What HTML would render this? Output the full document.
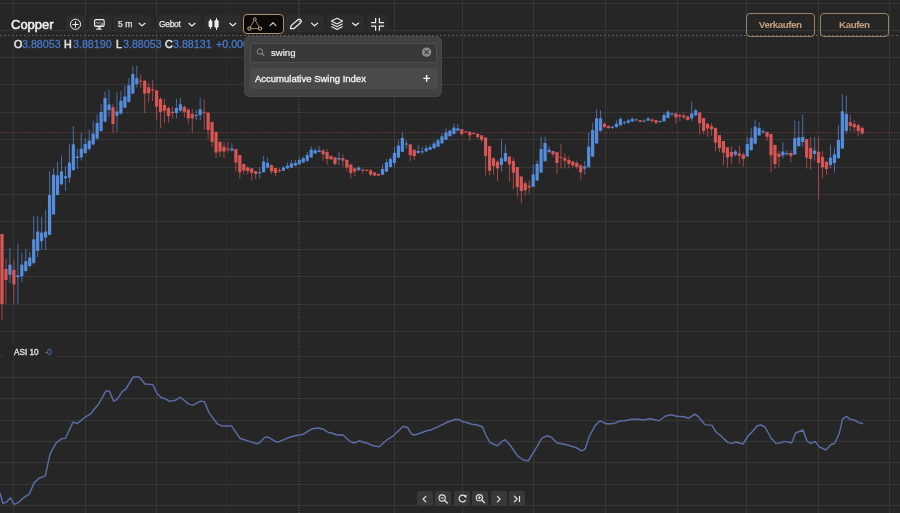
<!DOCTYPE html>
<html><head><meta charset="utf-8">
<style>
*{box-sizing:border-box}
html,body{margin:0;-webkit-font-smoothing:antialiased;padding:0;width:900px;height:513px;overflow:hidden;background:#262626;font-family:"Liberation Sans",sans-serif;color:#e6e6e6}
svg{position:absolute;left:0;top:0}
.abs{position:absolute;white-space:nowrap;will-change:transform}
.tb{position:absolute;top:14.5px;height:17px;background:#2c2c2c;border-radius:3px}
.title{position:absolute;will-change:transform;left:11px;top:18.1px;font-size:13px;line-height:14px;color:#f2f2f2;-webkit-text-stroke:0.5px #f2f2f2}
.legend{position:absolute;left:0;top:38px;font-size:10.7px;line-height:12px;color:#e8e8e8;white-space:nowrap}
.legend span{color:#4879c8;-webkit-text-stroke:0.3px #4879c8}
.legend b{font-weight:normal;color:#e4e4e4;-webkit-text-stroke:0.55px #e4e4e4}
.dd{font-size:8.5px;line-height:10px;letter-spacing:-0.35px;word-spacing:0.8px;color:#e8e8e8;-webkit-text-stroke:0.25px #e8e8e8}
.popup{position:absolute;left:244px;top:36px;width:198px;height:61px;background:#414141;border:1px solid #474747;border-radius:5px}
.search{position:absolute;left:5px;top:6px;width:187px;height:20px;background:#393939;border:1px solid #4f4f4f;border-radius:2px}
.row{position:absolute;left:5px;top:31px;width:188px;height:21px;background:#4a4a4a;border-radius:3px}
.btn{position:absolute;will-change:transform;top:12.5px;height:23.6px;border:1px solid #9c8268;border-radius:4px;color:#c99f7c;font-size:9.8px;font-weight:bold;letter-spacing:-0.45px;text-align:center;line-height:22px}
.nav{position:absolute;top:490.5px;width:16px;height:15.2px;background:#393939;border-radius:2px}
#wrap{position:absolute;left:-4px;top:-4px;width:908px;height:521px;overflow:hidden;filter:blur(0.3px);background:#262626}
#in{position:absolute;left:4px;top:4px;width:900px;height:513px}
</style></head><body><div id="wrap"><div id="in">
<svg width="900" height="513" viewBox="0 0 900 513">
<rect x="13" y="0" width="1" height="513" fill="#373737" fill-opacity="0.8"/>
<rect x="85" y="0" width="1" height="513" fill="#373737" fill-opacity="1"/>
<rect x="156" y="0" width="1" height="513" fill="#373737" fill-opacity="1"/>
<rect x="226" y="0" width="1" height="513" fill="#373737" fill-opacity="0.45"/>
<rect x="394" y="0" width="1" height="513" fill="#373737" fill-opacity="1"/>
<rect x="462" y="0" width="1" height="513" fill="#373737" fill-opacity="1"/>
<rect x="533" y="0" width="1" height="513" fill="#373737" fill-opacity="1"/>
<rect x="605" y="0" width="1" height="513" fill="#373737" fill-opacity="1"/>
<rect x="677" y="0" width="1" height="513" fill="#373737" fill-opacity="1"/>
<rect x="746" y="0" width="1" height="513" fill="#373737" fill-opacity="1"/>
<rect x="818" y="0" width="1" height="513" fill="#373737" fill-opacity="1"/>
<rect x="889" y="0" width="1" height="513" fill="#373737" fill-opacity="1"/>
<rect x="0" y="3" width="900" height="1" fill="#373737"/>
<rect x="0" y="30" width="900" height="1" fill="#373737"/>
<rect x="0" y="57" width="900" height="1" fill="#373737"/>
<rect x="0" y="84" width="900" height="1" fill="#373737"/>
<rect x="0" y="112" width="900" height="1" fill="#373737"/>
<rect x="0" y="139" width="900" height="1" fill="#373737"/>
<rect x="0" y="167" width="900" height="1" fill="#373737"/>
<rect x="0" y="194" width="900" height="1" fill="#373737"/>
<rect x="0" y="221" width="900" height="1" fill="#373737"/>
<rect x="0" y="249" width="900" height="1" fill="#373737"/>
<rect x="0" y="276" width="900" height="1" fill="#373737"/>
<rect x="0" y="304" width="900" height="1" fill="#373737"/>
<rect x="0" y="331" width="900" height="1" fill="#373737"/>
<rect x="0" y="356" width="900" height="1" fill="#373737"/>
<rect x="0" y="377" width="900" height="1" fill="#373737"/>
<rect x="0" y="398" width="900" height="1" fill="#373737"/>
<rect x="0" y="420" width="900" height="1" fill="#373737"/>
<rect x="0" y="441" width="900" height="1" fill="#373737"/>
<rect x="0" y="462" width="900" height="1" fill="#373737"/>
<rect x="0" y="484" width="900" height="1" fill="#373737"/>
<rect x="0" y="505" width="900" height="1" fill="#373737"/>
<line x1="0" y1="132.7" x2="900" y2="132.7" stroke="#723a3a" stroke-width="1" stroke-dasharray="1.5 1.5"/>
<rect x="1.5" y="234" width="1" height="85.8" fill="#d95656" fill-opacity="0.7"/>
<rect x="0.4" y="234" width="3.2" height="70" fill="#d95656"/>
<rect x="5.46" y="258.6" width="1" height="45.1" fill="#d95656" fill-opacity="0.7"/>
<rect x="4.36" y="269" width="3.2" height="11" fill="#d95656"/>
<rect x="9.43" y="247.9" width="1" height="35.4" fill="#558ddd" fill-opacity="0.7"/>
<rect x="8.33" y="264.6" width="3.2" height="10.1" fill="#558ddd"/>
<rect x="13.39" y="259.7" width="1" height="44" fill="#d95656" fill-opacity="0.7"/>
<rect x="12.29" y="269.8" width="3.2" height="14.6" fill="#d95656"/>
<rect x="17.36" y="243.6" width="1" height="60.1" fill="#558ddd" fill-opacity="0.7"/>
<rect x="16.26" y="275.4" width="3.2" height="1.6" fill="#558ddd"/>
<rect x="21.32" y="253.3" width="1" height="28.9" fill="#558ddd" fill-opacity="0.7"/>
<rect x="20.22" y="264.6" width="3.2" height="11.6" fill="#558ddd"/>
<rect x="25.28" y="249" width="1" height="23.6" fill="#558ddd" fill-opacity="0.7"/>
<rect x="24.18" y="261.2" width="3.2" height="9.8" fill="#558ddd"/>
<rect x="29.25" y="251.8" width="1" height="15.8" fill="#558ddd" fill-opacity="0.7"/>
<rect x="28.15" y="257.6" width="3.2" height="8.5" fill="#558ddd"/>
<rect x="33.21" y="216" width="1" height="48.6" fill="#558ddd" fill-opacity="0.7"/>
<rect x="32.11" y="239.3" width="3.2" height="23.6" fill="#558ddd"/>
<rect x="37.18" y="216.5" width="1" height="40.5" fill="#558ddd" fill-opacity="0.7"/>
<rect x="36.08" y="231.5" width="3.2" height="19.4" fill="#558ddd"/>
<rect x="41.14" y="217" width="1" height="32.8" fill="#558ddd" fill-opacity="0.7"/>
<rect x="40.04" y="232.6" width="3.2" height="8.6" fill="#558ddd"/>
<rect x="45.1" y="210" width="1" height="39.8" fill="#558ddd" fill-opacity="0.7"/>
<rect x="44" y="231.5" width="3.2" height="6.1" fill="#558ddd"/>
<rect x="49.07" y="171.5" width="1" height="63.3" fill="#558ddd" fill-opacity="0.7"/>
<rect x="47.97" y="195" width="3.2" height="39.8" fill="#558ddd"/>
<rect x="53.03" y="168.2" width="1" height="46.2" fill="#558ddd" fill-opacity="0.7"/>
<rect x="51.93" y="174.7" width="3.2" height="39.7" fill="#558ddd"/>
<rect x="57" y="161.8" width="1" height="33.2" fill="#558ddd" fill-opacity="0.7"/>
<rect x="55.9" y="175.3" width="3.2" height="19.7" fill="#558ddd"/>
<rect x="60.96" y="155.4" width="1" height="30" fill="#558ddd" fill-opacity="0.7"/>
<rect x="59.86" y="171.5" width="3.2" height="12.8" fill="#558ddd"/>
<rect x="64.92" y="166" width="1" height="24.8" fill="#558ddd" fill-opacity="0.7"/>
<rect x="63.82" y="176.2" width="3.2" height="2.1" fill="#558ddd"/>
<rect x="68.89" y="144.4" width="1" height="38.6" fill="#558ddd" fill-opacity="0.7"/>
<rect x="67.79" y="162.6" width="3.2" height="15" fill="#558ddd"/>
<rect x="72.85" y="126.1" width="1" height="44.9" fill="#558ddd" fill-opacity="0.7"/>
<rect x="71.75" y="144.4" width="3.2" height="25.6" fill="#558ddd"/>
<rect x="76.82" y="148.7" width="1" height="20.3" fill="#558ddd" fill-opacity="0.7"/>
<rect x="75.72" y="156.5" width="3.2" height="1.5" fill="#558ddd"/>
<rect x="80.78" y="132.6" width="1" height="27.9" fill="#558ddd" fill-opacity="0.7"/>
<rect x="79.68" y="148.7" width="3.2" height="8.6" fill="#558ddd"/>
<rect x="84.74" y="138" width="1" height="16" fill="#558ddd" fill-opacity="0.7"/>
<rect x="83.64" y="144" width="3.2" height="9" fill="#558ddd"/>
<rect x="88.71" y="129.4" width="1" height="21.4" fill="#558ddd" fill-opacity="0.7"/>
<rect x="87.61" y="140.7" width="3.2" height="8.3" fill="#558ddd"/>
<rect x="92.67" y="120.8" width="1" height="24.7" fill="#558ddd" fill-opacity="0.7"/>
<rect x="91.57" y="133.6" width="3.2" height="10.8" fill="#558ddd"/>
<rect x="96.64" y="114.3" width="1" height="25.7" fill="#558ddd" fill-opacity="0.7"/>
<rect x="95.54" y="123" width="3.2" height="15.4" fill="#558ddd"/>
<rect x="100.6" y="104.5" width="1" height="27" fill="#558ddd" fill-opacity="0.7"/>
<rect x="99.5" y="112" width="3.2" height="19" fill="#558ddd"/>
<rect x="104.56" y="91.5" width="1" height="31" fill="#558ddd" fill-opacity="0.7"/>
<rect x="103.46" y="98" width="3.2" height="23.5" fill="#558ddd"/>
<rect x="108.53" y="89.5" width="1" height="27.5" fill="#558ddd" fill-opacity="0.7"/>
<rect x="107.43" y="104.5" width="3.2" height="5.5" fill="#558ddd"/>
<rect x="112.49" y="104" width="1" height="29" fill="#d95656" fill-opacity="0.7"/>
<rect x="111.39" y="107.2" width="3.2" height="16.8" fill="#d95656"/>
<rect x="116.46" y="92.2" width="1" height="39.7" fill="#558ddd" fill-opacity="0.7"/>
<rect x="115.36" y="111.5" width="3.2" height="4.3" fill="#558ddd"/>
<rect x="120.42" y="91.1" width="1" height="23.6" fill="#558ddd" fill-opacity="0.7"/>
<rect x="119.32" y="100.8" width="3.2" height="12.8" fill="#558ddd"/>
<rect x="124.38" y="85.8" width="1" height="22.5" fill="#558ddd" fill-opacity="0.7"/>
<rect x="123.28" y="96.5" width="3.2" height="11.1" fill="#558ddd"/>
<rect x="128.35" y="78.2" width="1" height="24.8" fill="#558ddd" fill-opacity="0.7"/>
<rect x="127.25" y="85.3" width="3.2" height="16.5" fill="#558ddd"/>
<rect x="132.31" y="66" width="1" height="28.3" fill="#558ddd" fill-opacity="0.7"/>
<rect x="131.21" y="74" width="3.2" height="19.5" fill="#558ddd"/>
<rect x="136.28" y="65.8" width="1" height="21.7" fill="#558ddd" fill-opacity="0.7"/>
<rect x="135.18" y="78.2" width="3.2" height="5.8" fill="#558ddd"/>
<rect x="140.24" y="74.5" width="1" height="13.5" fill="#d95656" fill-opacity="0.7"/>
<rect x="139.14" y="80.6" width="3.2" height="1" fill="#d95656"/>
<rect x="144.2" y="79.7" width="1" height="33.3" fill="#d95656" fill-opacity="0.7"/>
<rect x="143.1" y="80.8" width="3.2" height="12.8" fill="#d95656"/>
<rect x="148.17" y="82.9" width="1" height="19.3" fill="#d95656" fill-opacity="0.7"/>
<rect x="147.07" y="87.2" width="3.2" height="6" fill="#d95656"/>
<rect x="152.13" y="80.3" width="1" height="20.8" fill="#d95656" fill-opacity="0.7"/>
<rect x="151.03" y="89.3" width="3.2" height="1.1" fill="#d95656"/>
<rect x="156.1" y="90.4" width="1" height="30.1" fill="#d95656" fill-opacity="0.7"/>
<rect x="155" y="90.4" width="3.2" height="16.1" fill="#d95656"/>
<rect x="160.06" y="96.8" width="1" height="31.2" fill="#d95656" fill-opacity="0.7"/>
<rect x="158.96" y="99" width="3.2" height="12.9" fill="#d95656"/>
<rect x="164.02" y="99" width="1" height="24.2" fill="#d95656" fill-opacity="0.7"/>
<rect x="162.92" y="105" width="3.2" height="5.8" fill="#d95656"/>
<rect x="167.99" y="106.5" width="1" height="16.1" fill="#d95656" fill-opacity="0.7"/>
<rect x="166.89" y="108" width="3.2" height="8.2" fill="#d95656"/>
<rect x="171.95" y="106.5" width="1" height="11.8" fill="#d95656" fill-opacity="0.7"/>
<rect x="170.85" y="111.9" width="3.2" height="1.1" fill="#d95656"/>
<rect x="175.92" y="99" width="1" height="19.3" fill="#558ddd" fill-opacity="0.7"/>
<rect x="174.82" y="108" width="3.2" height="5" fill="#558ddd"/>
<rect x="179.88" y="97.9" width="1" height="13.9" fill="#558ddd" fill-opacity="0.7"/>
<rect x="178.78" y="104.3" width="3.2" height="6.5" fill="#558ddd"/>
<rect x="183.84" y="105.4" width="1" height="11.8" fill="#d95656" fill-opacity="0.7"/>
<rect x="182.74" y="106.9" width="3.2" height="4.9" fill="#d95656"/>
<rect x="187.81" y="108.6" width="1" height="15" fill="#d95656" fill-opacity="0.7"/>
<rect x="186.71" y="109.7" width="3.2" height="8.6" fill="#d95656"/>
<rect x="191.77" y="108.6" width="1" height="23.6" fill="#d95656" fill-opacity="0.7"/>
<rect x="190.67" y="114" width="3.2" height="4.3" fill="#d95656"/>
<rect x="195.74" y="109.7" width="1" height="10.7" fill="#558ddd" fill-opacity="0.7"/>
<rect x="194.64" y="115" width="3.2" height="1.1" fill="#558ddd"/>
<rect x="199.7" y="97.9" width="1" height="22.5" fill="#558ddd" fill-opacity="0.7"/>
<rect x="198.6" y="109.3" width="3.2" height="5.7" fill="#558ddd"/>
<rect x="203.66" y="99.5" width="1" height="30.5" fill="#d95656" fill-opacity="0.7"/>
<rect x="202.56" y="111.8" width="3.2" height="1.1" fill="#d95656"/>
<rect x="207.63" y="112.5" width="1" height="26.1" fill="#d95656" fill-opacity="0.7"/>
<rect x="206.53" y="112.7" width="3.2" height="17.3" fill="#d95656"/>
<rect x="211.59" y="121.9" width="1" height="25.3" fill="#d95656" fill-opacity="0.7"/>
<rect x="210.49" y="121.9" width="3.2" height="20" fill="#d95656"/>
<rect x="215.56" y="131.8" width="1" height="26.2" fill="#d95656" fill-opacity="0.7"/>
<rect x="214.46" y="131.8" width="3.2" height="20.8" fill="#d95656"/>
<rect x="219.52" y="140.8" width="1" height="16.1" fill="#d95656" fill-opacity="0.7"/>
<rect x="218.42" y="141.9" width="3.2" height="9.6" fill="#d95656"/>
<rect x="223.48" y="141.9" width="1" height="16.1" fill="#d95656" fill-opacity="0.7"/>
<rect x="222.38" y="146.8" width="3.2" height="4.7" fill="#d95656"/>
<rect x="227.45" y="141.9" width="1" height="10.7" fill="#d95656" fill-opacity="0.7"/>
<rect x="226.35" y="148.6" width="3.2" height="1" fill="#d95656"/>
<rect x="231.41" y="143.1" width="1" height="8.5" fill="#558ddd" fill-opacity="0.7"/>
<rect x="230.31" y="148.5" width="3.2" height="2.1" fill="#558ddd"/>
<rect x="235.38" y="149" width="1" height="22.5" fill="#d95656" fill-opacity="0.7"/>
<rect x="234.28" y="149" width="3.2" height="13.5" fill="#d95656"/>
<rect x="239.34" y="155" width="1" height="23.7" fill="#d95656" fill-opacity="0.7"/>
<rect x="238.24" y="155" width="3.2" height="17.2" fill="#d95656"/>
<rect x="243.3" y="164" width="1" height="10.4" fill="#d95656" fill-opacity="0.7"/>
<rect x="242.2" y="164" width="3.2" height="6.5" fill="#d95656"/>
<rect x="247.27" y="166.2" width="1" height="8.2" fill="#d95656" fill-opacity="0.7"/>
<rect x="246.17" y="167.5" width="3.2" height="3.7" fill="#d95656"/>
<rect x="251.23" y="168.4" width="1" height="12.4" fill="#d95656" fill-opacity="0.7"/>
<rect x="250.13" y="168.4" width="3.2" height="4.3" fill="#d95656"/>
<rect x="255.2" y="171" width="1" height="8" fill="#d95656" fill-opacity="0.7"/>
<rect x="254.1" y="171.2" width="3.2" height="2.8" fill="#d95656"/>
<rect x="259.16" y="166.9" width="1" height="11.8" fill="#558ddd" fill-opacity="0.7"/>
<rect x="258.06" y="172.2" width="3.2" height="1.1" fill="#558ddd"/>
<rect x="263.12" y="156" width="1" height="16.5" fill="#558ddd" fill-opacity="0.7"/>
<rect x="262.02" y="161.6" width="3.2" height="10.6" fill="#558ddd"/>
<rect x="267.09" y="157.4" width="1" height="11" fill="#558ddd" fill-opacity="0.7"/>
<rect x="265.99" y="163" width="3.2" height="4.6" fill="#558ddd"/>
<rect x="271.05" y="164.7" width="1" height="9.1" fill="#d95656" fill-opacity="0.7"/>
<rect x="269.95" y="165" width="3.2" height="6.5" fill="#d95656"/>
<rect x="275.02" y="168" width="1" height="8.2" fill="#d95656" fill-opacity="0.7"/>
<rect x="273.92" y="168" width="3.2" height="5" fill="#d95656"/>
<rect x="278.98" y="168" width="1" height="5" fill="#d95656" fill-opacity="0.7"/>
<rect x="277.88" y="170" width="3.2" height="1" fill="#d95656"/>
<rect x="282.94" y="166" width="1" height="5.2" fill="#558ddd" fill-opacity="0.7"/>
<rect x="281.84" y="167.6" width="3.2" height="3.1" fill="#558ddd"/>
<rect x="286.91" y="162.4" width="1" height="6.6" fill="#558ddd" fill-opacity="0.7"/>
<rect x="285.81" y="165.6" width="3.2" height="2.8" fill="#558ddd"/>
<rect x="290.87" y="159.8" width="1" height="8.2" fill="#558ddd" fill-opacity="0.7"/>
<rect x="289.77" y="163.4" width="3.2" height="4.2" fill="#558ddd"/>
<rect x="294.84" y="160" width="1" height="6" fill="#558ddd" fill-opacity="0.7"/>
<rect x="293.74" y="162.9" width="3.2" height="2.7" fill="#558ddd"/>
<rect x="298.8" y="156.8" width="1" height="8.4" fill="#558ddd" fill-opacity="0.7"/>
<rect x="297.7" y="160" width="3.2" height="4.5" fill="#558ddd"/>
<rect x="302.76" y="156.5" width="1" height="6.5" fill="#558ddd" fill-opacity="0.7"/>
<rect x="301.66" y="158.2" width="3.2" height="4.3" fill="#558ddd"/>
<rect x="306.73" y="152" width="1" height="9.5" fill="#558ddd" fill-opacity="0.7"/>
<rect x="305.63" y="155" width="3.2" height="5.9" fill="#558ddd"/>
<rect x="310.69" y="146.2" width="1" height="11.8" fill="#558ddd" fill-opacity="0.7"/>
<rect x="309.59" y="149.6" width="3.2" height="7.8" fill="#558ddd"/>
<rect x="314.66" y="147.8" width="1" height="6.2" fill="#558ddd" fill-opacity="0.7"/>
<rect x="313.56" y="150.4" width="3.2" height="3.1" fill="#558ddd"/>
<rect x="318.62" y="146.2" width="1" height="6.3" fill="#558ddd" fill-opacity="0.7"/>
<rect x="317.52" y="150.4" width="3.2" height="1.6" fill="#558ddd"/>
<rect x="322.58" y="148.9" width="1" height="11.7" fill="#d95656" fill-opacity="0.7"/>
<rect x="321.48" y="150.4" width="3.2" height="3.9" fill="#d95656"/>
<rect x="326.55" y="148.9" width="1" height="15.6" fill="#d95656" fill-opacity="0.7"/>
<rect x="325.45" y="152" width="3.2" height="7" fill="#d95656"/>
<rect x="330.51" y="155" width="1" height="5" fill="#d95656" fill-opacity="0.7"/>
<rect x="329.41" y="156.2" width="3.2" height="3.1" fill="#d95656"/>
<rect x="334.48" y="157" width="1" height="8.5" fill="#d95656" fill-opacity="0.7"/>
<rect x="333.38" y="157.4" width="3.2" height="6.6" fill="#d95656"/>
<rect x="338.44" y="152" width="1" height="13.2" fill="#558ddd" fill-opacity="0.7"/>
<rect x="337.34" y="158" width="3.2" height="1.5" fill="#558ddd"/>
<rect x="342.4" y="154.3" width="1" height="12.7" fill="#d95656" fill-opacity="0.7"/>
<rect x="341.3" y="158.2" width="3.2" height="2.4" fill="#d95656"/>
<rect x="346.37" y="159.8" width="1" height="11.7" fill="#d95656" fill-opacity="0.7"/>
<rect x="345.27" y="159.8" width="3.2" height="7.8" fill="#d95656"/>
<rect x="350.33" y="163.7" width="1" height="14.8" fill="#d95656" fill-opacity="0.7"/>
<rect x="349.23" y="164.5" width="3.2" height="8.5" fill="#d95656"/>
<rect x="354.3" y="167.6" width="1" height="8.6" fill="#d95656" fill-opacity="0.7"/>
<rect x="353.2" y="168.4" width="3.2" height="3.1" fill="#d95656"/>
<rect x="358.26" y="166" width="1" height="5.5" fill="#558ddd" fill-opacity="0.7"/>
<rect x="357.16" y="167.6" width="3.2" height="2.4" fill="#558ddd"/>
<rect x="362.22" y="168.7" width="1" height="5.1" fill="#d95656" fill-opacity="0.7"/>
<rect x="361.12" y="169.6" width="3.2" height="1.1" fill="#d95656"/>
<rect x="366.19" y="169.5" width="1" height="2" fill="#d95656" fill-opacity="0.7"/>
<rect x="365.09" y="169.8" width="3.2" height="1" fill="#d95656"/>
<rect x="370.15" y="169" width="1" height="7.6" fill="#d95656" fill-opacity="0.7"/>
<rect x="369.05" y="170.4" width="3.2" height="4.2" fill="#d95656"/>
<rect x="374.12" y="172" width="1" height="4" fill="#d95656" fill-opacity="0.7"/>
<rect x="373.02" y="172.4" width="3.2" height="3.1" fill="#d95656"/>
<rect x="378.08" y="173.5" width="1" height="2.5" fill="#d95656" fill-opacity="0.7"/>
<rect x="376.98" y="174" width="3.2" height="1.5" fill="#d95656"/>
<rect x="382.04" y="164.6" width="1" height="10.4" fill="#558ddd" fill-opacity="0.7"/>
<rect x="380.94" y="169" width="3.2" height="5.7" fill="#558ddd"/>
<rect x="386.01" y="159.1" width="1" height="12.9" fill="#558ddd" fill-opacity="0.7"/>
<rect x="384.91" y="162.3" width="3.2" height="9.3" fill="#558ddd"/>
<rect x="389.97" y="156.8" width="1" height="10.7" fill="#558ddd" fill-opacity="0.7"/>
<rect x="388.87" y="159.1" width="3.2" height="7.9" fill="#558ddd"/>
<rect x="393.94" y="146.7" width="1" height="20.3" fill="#558ddd" fill-opacity="0.7"/>
<rect x="392.84" y="152.9" width="3.2" height="10.1" fill="#558ddd"/>
<rect x="397.9" y="140.4" width="1" height="17.6" fill="#558ddd" fill-opacity="0.7"/>
<rect x="396.8" y="145.6" width="3.2" height="12" fill="#558ddd"/>
<rect x="401.86" y="132.6" width="1" height="19.7" fill="#558ddd" fill-opacity="0.7"/>
<rect x="400.76" y="138" width="3.2" height="13.8" fill="#558ddd"/>
<rect x="405.83" y="140.2" width="1" height="8.3" fill="#558ddd" fill-opacity="0.7"/>
<rect x="404.73" y="143.5" width="3.2" height="1" fill="#558ddd"/>
<rect x="409.79" y="144.3" width="1" height="16.7" fill="#d95656" fill-opacity="0.7"/>
<rect x="408.69" y="144.3" width="3.2" height="10.9" fill="#d95656"/>
<rect x="413.76" y="149.4" width="1" height="10.6" fill="#d95656" fill-opacity="0.7"/>
<rect x="412.66" y="149.8" width="3.2" height="6.2" fill="#d95656"/>
<rect x="417.72" y="145.1" width="1" height="8.6" fill="#558ddd" fill-opacity="0.7"/>
<rect x="416.62" y="150.9" width="3.2" height="2" fill="#558ddd"/>
<rect x="421.68" y="146.7" width="1" height="7.8" fill="#558ddd" fill-opacity="0.7"/>
<rect x="420.58" y="151.3" width="3.2" height="1" fill="#558ddd"/>
<rect x="425.65" y="145.1" width="1" height="7" fill="#558ddd" fill-opacity="0.7"/>
<rect x="424.55" y="148.2" width="3.2" height="3.1" fill="#558ddd"/>
<rect x="429.61" y="144.6" width="1" height="5.6" fill="#558ddd" fill-opacity="0.7"/>
<rect x="428.51" y="147.1" width="3.2" height="2.7" fill="#558ddd"/>
<rect x="433.58" y="141.2" width="1" height="7.8" fill="#558ddd" fill-opacity="0.7"/>
<rect x="432.48" y="143.5" width="3.2" height="4.7" fill="#558ddd"/>
<rect x="437.54" y="138.9" width="1" height="8.1" fill="#558ddd" fill-opacity="0.7"/>
<rect x="436.44" y="140.4" width="3.2" height="6.3" fill="#558ddd"/>
<rect x="441.5" y="133.4" width="1" height="10.4" fill="#558ddd" fill-opacity="0.7"/>
<rect x="440.4" y="136.4" width="3.2" height="6.9" fill="#558ddd"/>
<rect x="445.47" y="128.2" width="1" height="12" fill="#558ddd" fill-opacity="0.7"/>
<rect x="444.37" y="132.5" width="3.2" height="7.3" fill="#558ddd"/>
<rect x="449.43" y="129.2" width="1" height="7.4" fill="#558ddd" fill-opacity="0.7"/>
<rect x="448.33" y="130.7" width="3.2" height="5.5" fill="#558ddd"/>
<rect x="453.4" y="123.7" width="1" height="10.5" fill="#558ddd" fill-opacity="0.7"/>
<rect x="452.3" y="127.6" width="3.2" height="6.3" fill="#558ddd"/>
<rect x="457.36" y="124" width="1" height="7" fill="#558ddd" fill-opacity="0.7"/>
<rect x="456.26" y="128.4" width="3.2" height="2.3" fill="#558ddd"/>
<rect x="461.32" y="129" width="1" height="6.4" fill="#d95656" fill-opacity="0.7"/>
<rect x="460.22" y="129.2" width="3.2" height="4.7" fill="#d95656"/>
<rect x="465.29" y="130.7" width="1" height="2.3" fill="#d95656" fill-opacity="0.7"/>
<rect x="464.19" y="131.5" width="3.2" height="1" fill="#d95656"/>
<rect x="469.25" y="131.5" width="1" height="9.4" fill="#d95656" fill-opacity="0.7"/>
<rect x="468.15" y="131.8" width="3.2" height="3.6" fill="#d95656"/>
<rect x="473.22" y="132.3" width="1" height="2.3" fill="#d95656" fill-opacity="0.7"/>
<rect x="472.12" y="133" width="3.2" height="1" fill="#d95656"/>
<rect x="477.18" y="133" width="1" height="5.5" fill="#d95656" fill-opacity="0.7"/>
<rect x="476.08" y="134" width="3.2" height="3.1" fill="#d95656"/>
<rect x="481.14" y="135" width="1" height="7" fill="#d95656" fill-opacity="0.7"/>
<rect x="480.04" y="135.4" width="3.2" height="4.4" fill="#d95656"/>
<rect x="485.11" y="137.5" width="1" height="37.9" fill="#d95656" fill-opacity="0.7"/>
<rect x="484.01" y="137.5" width="3.2" height="18.4" fill="#d95656"/>
<rect x="489.07" y="146.2" width="1" height="29.2" fill="#d95656" fill-opacity="0.7"/>
<rect x="487.97" y="146.2" width="3.2" height="24.5" fill="#d95656"/>
<rect x="493.04" y="157.4" width="1" height="17.2" fill="#d95656" fill-opacity="0.7"/>
<rect x="491.94" y="158.2" width="3.2" height="7.8" fill="#d95656"/>
<rect x="497" y="159.8" width="1" height="21" fill="#d95656" fill-opacity="0.7"/>
<rect x="495.9" y="161.8" width="3.2" height="6.6" fill="#d95656"/>
<rect x="500.96" y="139" width="1" height="32.5" fill="#558ddd" fill-opacity="0.7"/>
<rect x="499.86" y="158.2" width="3.2" height="6.7" fill="#558ddd"/>
<rect x="504.93" y="144.6" width="1" height="17.5" fill="#558ddd" fill-opacity="0.7"/>
<rect x="503.83" y="153" width="3.2" height="8.3" fill="#558ddd"/>
<rect x="508.89" y="155.9" width="1" height="25.7" fill="#d95656" fill-opacity="0.7"/>
<rect x="507.79" y="156.7" width="3.2" height="7.8" fill="#d95656"/>
<rect x="512.86" y="158" width="1" height="31.4" fill="#d95656" fill-opacity="0.7"/>
<rect x="511.76" y="161" width="3.2" height="11.5" fill="#d95656"/>
<rect x="516.82" y="166.8" width="1" height="30.4" fill="#d95656" fill-opacity="0.7"/>
<rect x="515.72" y="167" width="3.2" height="20" fill="#d95656"/>
<rect x="520.78" y="176.5" width="1" height="26.8" fill="#d95656" fill-opacity="0.7"/>
<rect x="519.68" y="176.5" width="3.2" height="14.5" fill="#d95656"/>
<rect x="524.75" y="181.4" width="1" height="14" fill="#d95656" fill-opacity="0.7"/>
<rect x="523.65" y="183.2" width="3.2" height="7" fill="#d95656"/>
<rect x="528.71" y="180.5" width="1" height="13.2" fill="#d95656" fill-opacity="0.7"/>
<rect x="527.61" y="185.8" width="3.2" height="1.7" fill="#d95656"/>
<rect x="532.68" y="164.7" width="1" height="22.3" fill="#558ddd" fill-opacity="0.7"/>
<rect x="531.58" y="174.4" width="3.2" height="12.3" fill="#558ddd"/>
<rect x="536.64" y="160.4" width="1" height="20.6" fill="#558ddd" fill-opacity="0.7"/>
<rect x="535.54" y="163.9" width="3.2" height="16.6" fill="#558ddd"/>
<rect x="540.6" y="136.7" width="1" height="36.3" fill="#558ddd" fill-opacity="0.7"/>
<rect x="539.5" y="149" width="3.2" height="23.6" fill="#558ddd"/>
<rect x="544.57" y="136.7" width="1" height="24.8" fill="#558ddd" fill-opacity="0.7"/>
<rect x="543.47" y="142.8" width="3.2" height="18.4" fill="#558ddd"/>
<rect x="548.53" y="146.3" width="1" height="7" fill="#558ddd" fill-opacity="0.7"/>
<rect x="547.43" y="149.8" width="3.2" height="2.2" fill="#558ddd"/>
<rect x="552.5" y="151" width="1" height="5.5" fill="#d95656" fill-opacity="0.7"/>
<rect x="551.4" y="151" width="3.2" height="3.3" fill="#d95656"/>
<rect x="556.46" y="152.1" width="1" height="21.9" fill="#d95656" fill-opacity="0.7"/>
<rect x="555.36" y="152.1" width="3.2" height="10.9" fill="#d95656"/>
<rect x="560.42" y="144.3" width="1" height="24.2" fill="#d95656" fill-opacity="0.7"/>
<rect x="559.32" y="156.8" width="3.2" height="1" fill="#d95656"/>
<rect x="564.39" y="153.7" width="1" height="14.8" fill="#d95656" fill-opacity="0.7"/>
<rect x="563.29" y="158" width="3.2" height="2.7" fill="#d95656"/>
<rect x="568.35" y="156.5" width="1" height="12" fill="#d95656" fill-opacity="0.7"/>
<rect x="567.25" y="160" width="3.2" height="3.8" fill="#d95656"/>
<rect x="572.32" y="160.7" width="1" height="7" fill="#d95656" fill-opacity="0.7"/>
<rect x="571.22" y="161.5" width="3.2" height="3.9" fill="#d95656"/>
<rect x="576.28" y="160.7" width="1" height="8.6" fill="#d95656" fill-opacity="0.7"/>
<rect x="575.18" y="163" width="3.2" height="4" fill="#d95656"/>
<rect x="580.24" y="163.8" width="1" height="15.6" fill="#d95656" fill-opacity="0.7"/>
<rect x="579.14" y="165.4" width="3.2" height="7" fill="#d95656"/>
<rect x="584.21" y="161" width="1" height="13.7" fill="#558ddd" fill-opacity="0.7"/>
<rect x="583.11" y="166.5" width="3.2" height="2.2" fill="#558ddd"/>
<rect x="588.17" y="132.5" width="1" height="35" fill="#558ddd" fill-opacity="0.7"/>
<rect x="587.07" y="146.6" width="3.2" height="20.6" fill="#558ddd"/>
<rect x="592.14" y="123.1" width="1" height="33.9" fill="#558ddd" fill-opacity="0.7"/>
<rect x="591.04" y="130.1" width="3.2" height="26.5" fill="#558ddd"/>
<rect x="596.1" y="109.4" width="1" height="34.4" fill="#558ddd" fill-opacity="0.7"/>
<rect x="595" y="118.4" width="3.2" height="25" fill="#558ddd"/>
<rect x="600.06" y="110.3" width="1" height="21" fill="#558ddd" fill-opacity="0.7"/>
<rect x="598.96" y="118.4" width="3.2" height="12.5" fill="#558ddd"/>
<rect x="604.03" y="122.3" width="1" height="6.2" fill="#d95656" fill-opacity="0.7"/>
<rect x="602.93" y="123.9" width="3.2" height="3.1" fill="#d95656"/>
<rect x="607.99" y="125.4" width="1" height="3.1" fill="#d95656" fill-opacity="0.7"/>
<rect x="606.89" y="125.9" width="3.2" height="2.2" fill="#d95656"/>
<rect x="611.96" y="125.4" width="1" height="3.6" fill="#558ddd" fill-opacity="0.7"/>
<rect x="610.86" y="127" width="3.2" height="1" fill="#558ddd"/>
<rect x="615.92" y="120.3" width="1" height="7.5" fill="#558ddd" fill-opacity="0.7"/>
<rect x="614.82" y="123.9" width="3.2" height="3.1" fill="#558ddd"/>
<rect x="619.88" y="117.3" width="1" height="8.2" fill="#558ddd" fill-opacity="0.7"/>
<rect x="618.78" y="119" width="3.2" height="6.3" fill="#558ddd"/>
<rect x="623.85" y="120.8" width="1" height="3.7" fill="#558ddd" fill-opacity="0.7"/>
<rect x="622.75" y="122.3" width="3.2" height="1" fill="#558ddd"/>
<rect x="627.81" y="118.9" width="1" height="4.4" fill="#558ddd" fill-opacity="0.7"/>
<rect x="626.71" y="120.4" width="3.2" height="2.4" fill="#558ddd"/>
<rect x="631.78" y="117.4" width="1" height="4.7" fill="#558ddd" fill-opacity="0.7"/>
<rect x="630.68" y="118.9" width="3.2" height="2.6" fill="#558ddd"/>
<rect x="635.74" y="118.2" width="1" height="3.1" fill="#558ddd" fill-opacity="0.7"/>
<rect x="634.64" y="119.4" width="3.2" height="1" fill="#558ddd"/>
<rect x="639.7" y="119.9" width="1" height="2.4" fill="#d95656" fill-opacity="0.7"/>
<rect x="638.6" y="120.2" width="3.2" height="1.6" fill="#d95656"/>
<rect x="643.67" y="119.4" width="1" height="2.9" fill="#558ddd" fill-opacity="0.7"/>
<rect x="642.57" y="120.6" width="3.2" height="1" fill="#558ddd"/>
<rect x="647.63" y="117.2" width="1" height="3.7" fill="#558ddd" fill-opacity="0.7"/>
<rect x="646.53" y="118.4" width="3.2" height="2.2" fill="#558ddd"/>
<rect x="651.6" y="118.4" width="1" height="4.4" fill="#d95656" fill-opacity="0.7"/>
<rect x="650.5" y="119.4" width="3.2" height="1.5" fill="#d95656"/>
<rect x="655.56" y="119.9" width="1" height="4.4" fill="#d95656" fill-opacity="0.7"/>
<rect x="654.46" y="120.1" width="3.2" height="2.7" fill="#d95656"/>
<rect x="659.52" y="120.6" width="1" height="2.2" fill="#558ddd" fill-opacity="0.7"/>
<rect x="658.42" y="121.1" width="3.2" height="1" fill="#558ddd"/>
<rect x="663.49" y="112.6" width="1" height="8.9" fill="#558ddd" fill-opacity="0.7"/>
<rect x="662.39" y="115" width="3.2" height="6.3" fill="#558ddd"/>
<rect x="667.45" y="110.1" width="1" height="8.1" fill="#558ddd" fill-opacity="0.7"/>
<rect x="666.35" y="111.6" width="3.2" height="6.3" fill="#558ddd"/>
<rect x="671.42" y="112.6" width="1" height="2.9" fill="#558ddd" fill-opacity="0.7"/>
<rect x="670.32" y="113.5" width="3.2" height="1" fill="#558ddd"/>
<rect x="675.38" y="112.6" width="1" height="11.2" fill="#d95656" fill-opacity="0.7"/>
<rect x="674.28" y="113.5" width="3.2" height="3.9" fill="#d95656"/>
<rect x="679.34" y="114" width="1" height="6.9" fill="#d95656" fill-opacity="0.7"/>
<rect x="678.24" y="115" width="3.2" height="1.5" fill="#d95656"/>
<rect x="683.31" y="112.6" width="1" height="6.8" fill="#d95656" fill-opacity="0.7"/>
<rect x="682.21" y="115.5" width="3.2" height="1.9" fill="#d95656"/>
<rect x="687.27" y="115.5" width="1" height="5.4" fill="#d95656" fill-opacity="0.7"/>
<rect x="686.17" y="116.5" width="3.2" height="3.4" fill="#d95656"/>
<rect x="691.24" y="101.3" width="1" height="20" fill="#558ddd" fill-opacity="0.7"/>
<rect x="690.14" y="113.5" width="3.2" height="4.9" fill="#558ddd"/>
<rect x="695.2" y="108.5" width="1" height="7.5" fill="#558ddd" fill-opacity="0.7"/>
<rect x="694.1" y="110.5" width="3.2" height="4.9" fill="#558ddd"/>
<rect x="699.16" y="112.5" width="1" height="21.9" fill="#d95656" fill-opacity="0.7"/>
<rect x="698.06" y="112.5" width="3.2" height="10.7" fill="#d95656"/>
<rect x="703.13" y="118.1" width="1" height="15.9" fill="#d95656" fill-opacity="0.7"/>
<rect x="702.03" y="118.1" width="3.2" height="12.8" fill="#d95656"/>
<rect x="707.09" y="122.8" width="1" height="14" fill="#d95656" fill-opacity="0.7"/>
<rect x="705.99" y="123.9" width="3.2" height="4.6" fill="#d95656"/>
<rect x="711.06" y="123.1" width="1" height="12.8" fill="#d95656" fill-opacity="0.7"/>
<rect x="709.96" y="126.2" width="3.2" height="3.1" fill="#d95656"/>
<rect x="715.02" y="127.8" width="1" height="23.4" fill="#d95656" fill-opacity="0.7"/>
<rect x="713.92" y="127.8" width="3.2" height="14.8" fill="#d95656"/>
<rect x="718.98" y="135.2" width="1" height="16.8" fill="#d95656" fill-opacity="0.7"/>
<rect x="717.88" y="135.2" width="3.2" height="12.8" fill="#d95656"/>
<rect x="722.95" y="141" width="1" height="24.2" fill="#d95656" fill-opacity="0.7"/>
<rect x="721.85" y="141" width="3.2" height="11.7" fill="#d95656"/>
<rect x="726.91" y="147.3" width="1" height="20.2" fill="#d95656" fill-opacity="0.7"/>
<rect x="725.81" y="147.3" width="3.2" height="10.1" fill="#d95656"/>
<rect x="730.88" y="146.4" width="1" height="17.4" fill="#d95656" fill-opacity="0.7"/>
<rect x="729.78" y="151.9" width="3.2" height="4.6" fill="#d95656"/>
<rect x="734.84" y="149.5" width="1" height="7" fill="#558ddd" fill-opacity="0.7"/>
<rect x="733.74" y="151.5" width="3.2" height="3.3" fill="#558ddd"/>
<rect x="738.8" y="145.6" width="1" height="17.9" fill="#d95656" fill-opacity="0.7"/>
<rect x="737.7" y="153.4" width="3.2" height="2.3" fill="#d95656"/>
<rect x="742.77" y="152.6" width="1" height="14" fill="#d95656" fill-opacity="0.7"/>
<rect x="741.67" y="154.6" width="3.2" height="4.2" fill="#d95656"/>
<rect x="746.73" y="137" width="1" height="20" fill="#558ddd" fill-opacity="0.7"/>
<rect x="745.63" y="144" width="3.2" height="12.5" fill="#558ddd"/>
<rect x="750.7" y="127.6" width="1" height="22.9" fill="#558ddd" fill-opacity="0.7"/>
<rect x="749.6" y="137.8" width="3.2" height="12.4" fill="#558ddd"/>
<rect x="754.66" y="119.8" width="1" height="24.2" fill="#558ddd" fill-opacity="0.7"/>
<rect x="753.56" y="126.8" width="3.2" height="16.9" fill="#558ddd"/>
<rect x="758.62" y="122.2" width="1" height="13.7" fill="#558ddd" fill-opacity="0.7"/>
<rect x="757.52" y="128.1" width="3.2" height="7.3" fill="#558ddd"/>
<rect x="762.59" y="129.2" width="1" height="4.7" fill="#558ddd" fill-opacity="0.7"/>
<rect x="761.49" y="131.2" width="3.2" height="1.1" fill="#558ddd"/>
<rect x="766.55" y="131.5" width="1" height="9.3" fill="#d95656" fill-opacity="0.7"/>
<rect x="765.45" y="132" width="3.2" height="4.8" fill="#d95656"/>
<rect x="770.52" y="133.9" width="1" height="38.4" fill="#d95656" fill-opacity="0.7"/>
<rect x="769.42" y="134" width="3.2" height="21.2" fill="#d95656"/>
<rect x="774.48" y="144.9" width="1" height="23.7" fill="#d95656" fill-opacity="0.7"/>
<rect x="773.38" y="144.9" width="3.2" height="19.1" fill="#d95656"/>
<rect x="778.44" y="150.7" width="1" height="16.3" fill="#d95656" fill-opacity="0.7"/>
<rect x="777.34" y="153.8" width="3.2" height="3.1" fill="#d95656"/>
<rect x="782.41" y="142.1" width="1" height="16.4" fill="#558ddd" fill-opacity="0.7"/>
<rect x="781.31" y="151.5" width="3.2" height="3.9" fill="#558ddd"/>
<rect x="786.37" y="149.6" width="1" height="5.8" fill="#558ddd" fill-opacity="0.7"/>
<rect x="785.27" y="153" width="3.2" height="1.3" fill="#558ddd"/>
<rect x="790.34" y="150.7" width="1" height="11.7" fill="#d95656" fill-opacity="0.7"/>
<rect x="789.24" y="153" width="3.2" height="3.2" fill="#d95656"/>
<rect x="794.3" y="120.3" width="1" height="34.7" fill="#558ddd" fill-opacity="0.7"/>
<rect x="793.2" y="138.2" width="3.2" height="16.4" fill="#558ddd"/>
<rect x="798.26" y="121.1" width="1" height="25.7" fill="#558ddd" fill-opacity="0.7"/>
<rect x="797.16" y="137.4" width="3.2" height="8.6" fill="#558ddd"/>
<rect x="802.23" y="114.8" width="1" height="32" fill="#558ddd" fill-opacity="0.7"/>
<rect x="801.13" y="137" width="3.2" height="5" fill="#558ddd"/>
<rect x="806.19" y="139.2" width="1" height="29.3" fill="#d95656" fill-opacity="0.7"/>
<rect x="805.09" y="139.2" width="3.2" height="18.4" fill="#d95656"/>
<rect x="810.16" y="137.2" width="1" height="32.2" fill="#d95656" fill-opacity="0.7"/>
<rect x="809.06" y="148" width="3.2" height="11.1" fill="#d95656"/>
<rect x="814.12" y="137.2" width="1" height="23.6" fill="#558ddd" fill-opacity="0.7"/>
<rect x="813.02" y="150.5" width="3.2" height="3.5" fill="#558ddd"/>
<rect x="818.08" y="137.2" width="1" height="62.2" fill="#d95656" fill-opacity="0.7"/>
<rect x="816.98" y="151.8" width="3.2" height="11.2" fill="#d95656"/>
<rect x="822.05" y="151.2" width="1" height="26.8" fill="#d95656" fill-opacity="0.7"/>
<rect x="820.95" y="157" width="3.2" height="10.3" fill="#d95656"/>
<rect x="826.01" y="160.8" width="1" height="14" fill="#d95656" fill-opacity="0.7"/>
<rect x="824.91" y="161.9" width="3.2" height="7.1" fill="#d95656"/>
<rect x="829.98" y="144.7" width="1" height="23.6" fill="#558ddd" fill-opacity="0.7"/>
<rect x="828.88" y="157.6" width="3.2" height="7.5" fill="#558ddd"/>
<rect x="833.94" y="147.5" width="1" height="25.1" fill="#558ddd" fill-opacity="0.7"/>
<rect x="832.84" y="154.4" width="3.2" height="8.6" fill="#558ddd"/>
<rect x="837.9" y="125.1" width="1" height="33.6" fill="#558ddd" fill-opacity="0.7"/>
<rect x="836.8" y="140" width="3.2" height="18.2" fill="#558ddd"/>
<rect x="841.87" y="94.1" width="1" height="54.9" fill="#558ddd" fill-opacity="0.7"/>
<rect x="840.77" y="111.3" width="3.2" height="37.2" fill="#558ddd"/>
<rect x="845.83" y="95.6" width="1" height="38.5" fill="#558ddd" fill-opacity="0.7"/>
<rect x="844.73" y="113.9" width="3.2" height="17.1" fill="#558ddd"/>
<rect x="849.8" y="114.6" width="1" height="16.4" fill="#d95656" fill-opacity="0.7"/>
<rect x="848.7" y="122.1" width="3.2" height="3.8" fill="#d95656"/>
<rect x="853.76" y="120.1" width="1" height="11.7" fill="#d95656" fill-opacity="0.7"/>
<rect x="852.66" y="124" width="3.2" height="3.4" fill="#d95656"/>
<rect x="857.72" y="124" width="1" height="12.5" fill="#d95656" fill-opacity="0.7"/>
<rect x="856.62" y="125.2" width="3.2" height="5.8" fill="#d95656"/>
<rect x="861.69" y="126.1" width="1" height="8.8" fill="#d95656" fill-opacity="0.7"/>
<rect x="860.59" y="127.9" width="3.2" height="5.5" fill="#d95656"/>
<polyline fill="none" stroke="#5c6ca5" stroke-width="1.45" stroke-linejoin="round" points="0,492.7 2.8,503.3 6.1,502.4 10.6,497.7 13.9,504.4 17.3,503.3 23.7,497.7 29.3,494.1 34,482.9 39,478.2 45.2,475.9 50.2,453.6 55.8,443.3 61.3,438.9 65.5,438.3 73,422.1 77.5,423.5 83.6,418.2 90.6,413.8 99,403.5 105.9,390.9 109.3,390.9 113.7,401.2 117.1,399.3 122.7,390.9 125.5,389.5 133.3,377 139.4,377 144.9,384 152.7,384.6 157.2,393.8 161.4,397.7 165.3,398.8 169.2,401.2 174.1,400.8 180.5,397.3 188.7,404.1 193,405.1 200.4,401.2 204.3,401.6 209.2,412.9 217,423.6 221.9,425.9 231.6,425.9 239.8,438.2 247.2,440.6 256.6,443.7 259.9,442.5 264.8,437.3 268.7,437.3 275.5,441.7 279.4,441.7 286.7,438.3 295,435.8 303.3,434.2 312.5,428.7 318.3,428 323.3,429.2 328.3,432.5 331.7,433 336.7,435 342.5,434.7 350,441.3 354.2,443 359.2,440.8 364.2,442.5 366.7,443 373.3,445.8 379.2,446.7 386.7,440 393.3,435.8 403.3,426.3 407.5,427.5 411.7,434.2 415,435 420,433.3 426.7,430.8 431.7,429.7 438.3,426.7 446.7,422.5 455.8,419.2 459.2,419.7 463.3,422 466.7,422.5 471.7,424.2 477.5,425 482.5,427 485.8,435 490,442.5 497.5,445.8 501.7,441.7 505,439.7 510,445 517.5,455.8 523.3,460 528.3,460.8 535,450 541.7,438.3 546.7,435.8 551.7,437.5 557,443 561.7,443.7 568.3,445.3 575.8,447.5 581.7,450.8 585,449.2 589.2,436.7 595,425.8 600,420.8 605.8,423.7 611.7,423.7 615,423 620.8,420.8 625,420.8 631.7,419.2 638.3,419.2 643.3,420 650,418.7 655.8,420 659.2,420.8 665,416.3 670.8,414.7 676.7,416.3 684.2,416.7 688.3,418.3 695,414.2 698.3,416.7 705,424.6 712,425.4 716,432 720,435 728,442.6 732,443.4 736,442 743,444 748,436 752,432 757,426 761,425 765,427 771,438 776,443.4 780,443 784,441.4 788,442 791.6,443 795.6,433 803,430 807,441 811,443.4 815,441.4 819,446.6 826,450 830.8,444.8 834.7,443.3 839.4,433.1 842.5,419.1 846.4,416.3 849.9,419.1 854.2,420 858.9,422.6 863.2,423.8"/>
</svg>
<div class="title">Copper</div>
<div class="tb" style="left:65.5px;width:20px"></div>
<div class="tb" style="left:88.5px;width:23px"></div>
<div class="tb" style="left:113.5px;width:37.5px"></div>
<div class="tb" style="left:156px;width:45px"></div>
<div class="tb" style="left:203.5px;width:37px"></div>
<div class="abs" style="left:243.2px;top:14.2px;width:40.6px;height:20.3px;background:#0c0a08;border:1px solid #b38f6e;border-radius:4px"></div>
<div class="tb" style="left:285.5px;width:38px"></div>
<div class="tb" style="left:327px;width:37px"></div>
<div class="tb" style="left:367px;width:21px"></div>
<span class="abs dd" style="left:117.8px;top:18.8px">5 m</span>
<span class="abs dd" style="left:159px;top:18.8px">Gebot</span>
<div class="legend">
<b class="abs" style="left:13.6px;letter-spacing:-0.3px">O</b><span class="abs" style="left:21.7px">3.88053</span>
<b class="abs" style="left:64.2px">H</b><span class="abs" style="left:72.8px">3.88190</span>
<b class="abs" style="left:115.6px">L</b><span class="abs" style="left:122.7px">3.88053</span>
<b class="abs" style="left:165px">C</b><span class="abs" style="left:172.5px">3.88131</span>
<span class="abs" style="left:216px">+0.00078</span>
</div>
<svg width="900" height="513" viewBox="0 0 900 513" style="pointer-events:none">
<line x1="299" y1="0" x2="299" y2="513" stroke="#5e5e5e" stroke-width="1" stroke-dasharray="1 1.6"/><line x1="0" y1="35.5" x2="900" y2="35.5" stroke="#6a6a6a" stroke-width="1" stroke-dasharray="1.5 2.5"/>
<circle cx="75.5" cy="24.3" r="5.1" fill="none" stroke="#ededed" stroke-width="1"/>
<path d="M72.4 24.5 H78.6 M75.5 21.3 V27.5" stroke="#ededed" stroke-width="1"/>
<rect x="94.55" y="19.55" width="9.6" height="6.8" rx="1.4" fill="none" stroke="#ededed" stroke-width="1.15"/>
<path d="M95.3 25.4 H103.4" stroke="#ededed" stroke-width="0.5"/>
<polyline points="95.7,23.5 96.9,22.2 98.2,23.6 99.5,23 100.7,22.2" fill="none" stroke="#ededed" stroke-width="0.7"/>
<path d="M100.3 25.2 L101.9 21.9 L103.3 23.7 V25.2 Z" fill="#ededed" fill-opacity="0.5"/>
<rect x="98.4" y="26.6" width="2" height="2" fill="#ededed"/><rect x="96.2" y="28.5" width="5.6" height="1.2" rx="0.4" fill="#ededed"/>
<polyline points="139.1,23.3 142.05,25.9 145,23.3" fill="none" stroke="#ededed" stroke-width="1.25" stroke-linecap="round" stroke-linejoin="round"/>
<polyline points="188.9,23.3 191.95,25.9 195,23.3" fill="none" stroke="#ededed" stroke-width="1.25" stroke-linecap="round" stroke-linejoin="round"/>
<polyline points="229.8,23.3 232.8,25.9 235.8,23.3" fill="none" stroke="#ededed" stroke-width="1.25" stroke-linecap="round" stroke-linejoin="round"/>
<polyline points="311.5,23.1 314.55,25.8 317.6,23.1" fill="none" stroke="#ededed" stroke-width="1.25" stroke-linecap="round" stroke-linejoin="round"/>
<polyline points="352.4,23.1 355.5,25.6 358.6,23.1" fill="none" stroke="#ededed" stroke-width="1.25" stroke-linecap="round" stroke-linejoin="round"/>
<polyline points="270,25.6 273.0,22.7 276,25.6" fill="none" stroke="#c8c8c8" stroke-width="1.2" stroke-linecap="round" stroke-linejoin="round"/>
<path d="M210.5 19 V29 M216.5 18 V30" stroke="#ededed" stroke-width="1"/>
<rect x="208.6" y="20.4" width="3.8" height="6.8" rx="1.3" fill="#ededed"/>
<rect x="214.5" y="19.9" width="4.1" height="7.8" rx="1.4" fill="#ededed"/>
<path d="M254.1 20.5 L250.1 27.4 M255.5 20.5 L259.3 27.4 M250.9 28.6 H258.5" stroke="#c9a786" stroke-width="0.9" stroke-opacity="0.85"/>
<circle cx="254.8" cy="19.2" r="1.4" fill="#0c0a08" stroke="#c9a786" stroke-width="1"/>
<circle cx="249.4" cy="28.6" r="1.6" fill="#0c0a08" stroke="#c9a786" stroke-width="1.1"/>
<circle cx="260.1" cy="28.6" r="1.6" fill="#0c0a08" stroke="#c9a786" stroke-width="1.1"/>
<g transform="translate(290.6 28.7) rotate(-41)"><path d="M0 0 L2.4 -2 H11.4 A2 2 0 0 1 11.4 2 H2.4 Z" fill="none" stroke="#ededed" stroke-width="1.3" stroke-linejoin="round"/><circle cx="11.4" cy="0" r="0.6" fill="#ededed"/></g>
<path d="M337 18.2 L342.6 21.1 L337 24 L331.4 21.1 Z" fill="none" stroke="#ededed" stroke-width="1.1" stroke-linejoin="round"/>
<path d="M331.4 23.8 L337 26.7 L342.6 23.8" fill="none" stroke="#ededed" stroke-width="1.1" stroke-linejoin="round"/>
<path d="M331.4 26.5 L337 29.4 L342.6 26.5" fill="none" stroke="#ededed" stroke-width="1.1" stroke-linejoin="round"/>
<path d="M371 22.6 H375.6 V18 M379.4 18 V22.6 H384 M371 26.2 H375.6 V30.8 M379.4 30.8 V26.2 H384" fill="none" stroke="#ededed" stroke-width="1.2"/>
</svg>
<div class="popup">
 <div class="search"></div>
 <div class="row"></div>
 <svg width="198" height="61" viewBox="244 36 198 61" style="left:-1px;top:-1px">
  <circle cx="259.9" cy="51.5" r="2.7" fill="none" stroke="#8e8e8e" stroke-width="1"/>
  <line x1="261.9" y1="53.5" x2="264" y2="55.6" stroke="#8e8e8e" stroke-width="1.1" stroke-linecap="round"/>
  <circle cx="426.6" cy="52.1" r="4.7" fill="#8c8c8c"/>
  <path d="M424.6 50.1 L428.6 54.1 M428.6 50.1 L424.6 54.1" stroke="#3a3a3a" stroke-width="1.1"/>
  <path d="M423.3 78.4 H430 M426.65 75 V81.8" stroke="#f4f4f4" stroke-width="1.4"/>
 </svg>
 <span class="abs" style="left:26.2px;top:10.3px;font-size:9.6px;line-height:12px;color:#ececec;-webkit-text-stroke:0.2px #ececec">swing</span>
 <span class="abs" style="left:10px;top:36.3px;font-size:9.5px;line-height:11px;color:#f0f0f0;-webkit-text-stroke:0.35px #f0f0f0">Accumulative Swing Index</span>
</div>
<div class="btn" style="left:746.2px;width:68.5px">Verkaufen</div>
<div class="btn" style="left:820.4px;width:68.6px">Kaufen</div>
<div class="abs" style="left:4px;top:343px;width:52px;height:16px;background:#262626"></div>
<div class="abs" style="left:14px;top:347.8px;font-size:8.2px;line-height:10px;color:#e6e6e6;-webkit-text-stroke:0.3px #e6e6e6">ASI 10</div>
<div class="abs" style="left:45px;top:347.3px;font-size:8.5px;line-height:10px;color:#888">-</div>
<div class="abs" style="left:47.3px;top:347.3px;font-size:8.5px;line-height:10px;color:#4a7fce">0</div>
<div class="nav" style="left:416.9px"></div>
<div class="nav" style="left:435.3px"></div>
<div class="nav" style="left:453.7px"></div>
<div class="nav" style="left:472.3px"></div>
<div class="nav" style="left:491px"></div>
<div class="nav" style="left:509.4px"></div>
<svg width="900" height="513" viewBox="0 0 900 513">
<polyline points="425.9,496.3 423.1,499.1 425.9,501.9" fill="none" stroke="#e6e6e6" stroke-width="1.2" stroke-linecap="round" stroke-linejoin="round"/>
<circle cx="442.1" cy="498" r="3.1" fill="none" stroke="#e6e6e6" stroke-width="1.1"/><path d="M444.4 500.3 L447.3 503" stroke="#e6e6e6" stroke-width="1.2" stroke-linecap="round"/><path d="M440.6 498 H443.6" stroke="#e6e6e6" stroke-width="1"/>
<path d="M465.3 496.6 A3.4 3.4 0 1 0 465.6 500" fill="none" stroke="#e6e6e6" stroke-width="1.2"/><path d="M463.2 495.6 L466.6 494.9 L466.3 498.2 Z" fill="#e6e6e6"/>
<circle cx="479.4" cy="497.7" r="3.1" fill="none" stroke="#e6e6e6" stroke-width="1.1"/><path d="M481.7 500 L484.6 502.7" stroke="#e6e6e6" stroke-width="1.2" stroke-linecap="round"/><path d="M477.9 497.7 H480.9 M479.4 496.2 V499.2" stroke="#e6e6e6" stroke-width="1"/>
<polyline points="497.4,496.3 500.2,499.1 497.4,501.9" fill="none" stroke="#e6e6e6" stroke-width="1.2" stroke-linecap="round" stroke-linejoin="round"/>
<polyline points="514.4,496.2 517.2,499 514.4,501.8" fill="none" stroke="#e6e6e6" stroke-width="1.2" stroke-linecap="round" stroke-linejoin="round"/><path d="M519.5 496 V502" stroke="#e6e6e6" stroke-width="1.2"/>
</svg>
</div></div></body></html>
